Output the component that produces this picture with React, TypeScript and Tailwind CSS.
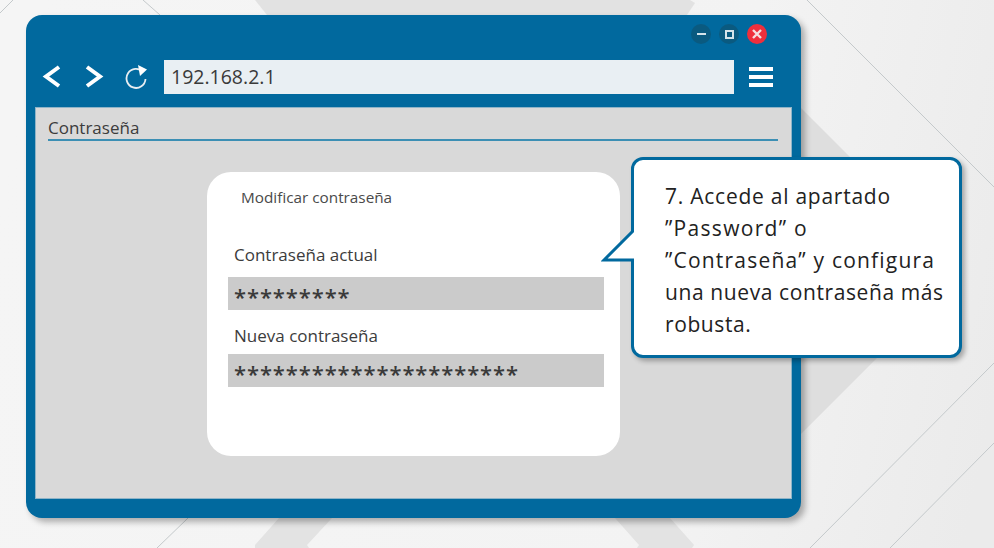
const fieldLabel = "text-[17px] leading-5 text-[#3c3c3c]";
const passwordField = "h-[33px] bg-[#cbcbcb] pl-[6px] pt-[5px] flex items-center text-[22px] font-semibold tracking-[0.9px] text-[#3a3a3a]";

function Background() {
  return (
    <svg className="absolute inset-0" width="994" height="548" viewBox="0 0 994 548" fill="none">
      <defs>
        <linearGradient id="bg" x1="0" y1="200" x2="994" y2="400" gradientUnits="userSpaceOnUse">
          <stop offset="0" stopColor="#f5f5f5" />
          <stop offset="0.7" stopColor="#f3f3f3" />
          <stop offset="1" stopColor="#ebebeb" />
        </linearGradient>
      </defs>
      <rect width="994" height="548" fill="url(#bg)" />
      <polygon points="255,0 690,0 695,3 687,15 267,15" fill="#e2e2e2" />
      <polygon points="801,108 958,265 958,277 801,434" fill="#dedede" />
      <polygon points="279,518 332,518 307,545 309,548 255,548 255,545" fill="#e3e3e3" />
      <polygon points="615,518 670,518 694,545 692,548 637,548 639,545" fill="#e3e3e3" />
      <g stroke="#c4c9cb" strokeWidth="1">
        <path d="M0 13 L13 0" />
        <path d="M143 0 L160 15" />
        <path d="M807 0 L994 187" />
        <path d="M157 548 L188 518" />
        <path d="M810 548 L994 363" />
        <path d="M890 548 L994 443" />
      </g>
    </svg>
  );
}

function Callout() {
  return (
    <div className="absolute left-[631px] top-[157px] w-[331px] h-[201px] bg-white border-[3px] border-[#01699e] rounded-[12px] shadow-[3px_3px_5px_rgba(0,0,0,0.3)] pl-[31px] pt-[20px] text-[21px] leading-[32px] tracking-[0.6px] text-[#222222]">
      <svg className="absolute left-[-33px] top-[68px]" width="36" height="40" viewBox="0 0 36 40" fill="none">
        <path d="M34 1 L3 32 H34" fill="white" stroke="#01699e" strokeWidth="3" />
        <rect x="33" y="0" width="3" height="34" fill="white" />
      </svg>
      <p className="tracking-[0.75px]">7. Accede al apartado</p>
      <p className="tracking-[1.3px]">”Password” o</p>
      <p className="tracking-[1.2px]">”Contraseña” y configura</p>
      <p>una nueva contraseña más</p>
      <p>robusta.</p>
    </div>
  );
}

export default function App() {
  return (
    <div className="relative w-[994px] h-[548px] overflow-hidden font-['Open_Sans','Liberation_Sans',sans-serif]">
      <Background />
      <div className="absolute left-[26px] top-[15px] w-[775px] h-[503px] flex flex-col rounded-[16px] bg-[#01699e] shadow-[4px_4px_6px_rgba(0,0,0,0.3)] px-[9px] pb-[19px]">
        <div className="flex justify-end items-center gap-[8px] h-[32px] pt-[6px] pr-[25px]">
          <div className="w-5 h-5 rounded-full bg-[#0a5a80] flex items-center justify-center">
            <div className="w-[9px] h-[2px] bg-[#d5e3ea]" />
          </div>
          <div className="w-5 h-5 rounded-full bg-[#0a5a80] flex items-center justify-center">
            <div className="w-[9px] h-[9px] border-2 border-[#d5e3ea]" />
          </div>
          <div className="w-5 h-5 rounded-full bg-[#ef2f3c] flex items-center justify-center">
            <svg width="10" height="10" viewBox="0 0 10 10" stroke="#f6dfe0" strokeWidth="2.4">
              <path d="M1 1 L9 9 M9 1 L1 9" />
            </svg>
          </div>
        </div>
        <div className="flex items-center h-[60px]">
          <svg className="ml-[7px]" width="20" height="24" viewBox="0 0 20 24" fill="none" stroke="white" strokeWidth="4">
            <path d="M17 2 L4 11.5 L17 21" />
          </svg>
          <svg className="ml-[22px]" width="20" height="24" viewBox="0 0 20 24" fill="none" stroke="white" strokeWidth="4">
            <path d="M3 2 L16 11.5 L3 21" />
          </svg>
          <svg className="ml-[21px]" width="24" height="26" viewBox="0 0 24 26" fill="none">
            <path d="M18 8 A9.5 9.5 0 1 0 20.5 15" stroke="#e8eef2" strokeWidth="1.8" />
            <path d="M13 1 L22 5.5 L15 12 Z" fill="white" />
          </svg>
          <div className="ml-[15px] w-[570px] h-[34px] bg-[#e9eff3] flex items-center pl-[7px] text-[19.5px] text-[#3a3a3a]">
            192.168.2.1
          </div>
          <div className="ml-[15px] flex flex-col gap-[4px]">
            <div className="w-[24px] h-[4px] bg-white" />
            <div className="w-[24px] h-[4px] bg-white" />
            <div className="w-[24px] h-[4px] bg-white" />
          </div>
        </div>
        <div className="flex-1 bg-[#d9d9d9] border border-[#8fb4c8] relative">
          <div className="ml-[12px] mr-[13px] mt-[8px] h-[25px] border-b-2 border-[#3c8fb4] text-[17px] leading-[24px] text-[#3c3c3c]">
            Contraseña
          </div>
          <div className="absolute left-[171px] top-[64px] w-[413px] h-[284px] bg-white rounded-[24px] pt-[15px] pl-[21px] pr-[16px]">
            <div className="pl-[13px] text-[15.3px] leading-5 text-[#4a4a4a]">Modificar contraseña</div>
            <div className={`mt-[38px] pl-[6px] ${fieldLabel}`}>Contraseña actual</div>
            <div className={`mt-[12px] ${passwordField}`}>*********</div>
            <div className={`mt-[16px] pl-[6px] ${fieldLabel}`}>Nueva contraseña</div>
            <div className={`mt-[8px] ${passwordField}`}>**********************</div>
          </div>
        </div>
      </div>
      <Callout />
    </div>
  );
}
